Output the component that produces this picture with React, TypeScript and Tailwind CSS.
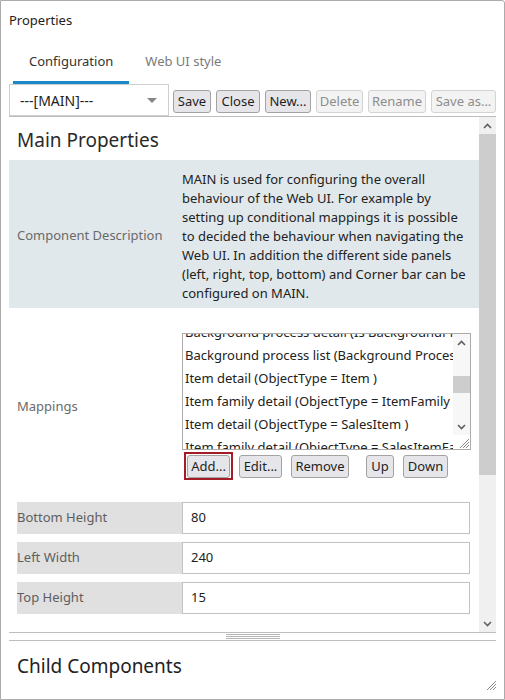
import React from 'react'

// Properties dialog – recreated as a static layout

const font = "font-['Noto_Sans','Open_Sans',sans-serif]"

function Chevron({ up }: { up?: boolean }) {
  return (
    <svg width="9" height="6" viewBox="0 0 9 6">
      <path
        d={up ? 'M1 5 L4.5 1.5 L8 5' : 'M1 1 L4.5 4.5 L8 1'}
        fill="none"
        stroke="#606060"
        strokeWidth="1.6"
      />
    </svg>
  )
}

function Grip() {
  return (
    <svg width="11" height="11" viewBox="0 0 11 11">
      <path d="M10 1 L1 10 M10 4 L4 10 M10 7 L7 10" stroke="#8a8a8a" strokeWidth="1" />
    </svg>
  )
}

function Btn({ label, w, disabled }: { label: string; w: string; disabled?: boolean }) {
  return (
    <div
      className={`${w} h-[23px] flex items-center justify-center rounded-[3px] border text-[13px] leading-none ${
        disabled
          ? 'border-[#d3d3d3] bg-[#f3f3f3] text-[#8d8d8d]'
          : 'border-[#a3a3a3] bg-[#e6e6ea] text-[#1e1e1e]'
      }`}
    >
      {label}
    </div>
  )
}

const description = [
  'MAIN is used for configuring the overall',
  'behaviour of the Web UI. For example by',
  'setting up conditional mappings it is possible',
  'to decided the behaviour when navigating the',
  'Web UI. In addition the different side panels',
  '(left, right, top, bottom) and Corner bar can be',
  'configured on MAIN.',
]

const mappings = [
  'Background process detail (Is BackgroundProcess = true )',
  'Background process list (Background Process list )',
  'Item detail (ObjectType = Item )',
  'Item family detail (ObjectType = ItemFamily )',
  'Item detail (ObjectType = SalesItem )',
  'Item family detail (ObjectType = SalesItemFamily )',
]

const fields = [
  { label: 'Bottom Height', value: '80' },
  { label: 'Left Width', value: '240' },
  { label: 'Top Height', value: '15' },
]

export default function App() {
  return (
    <div
      className={`${font} w-[505px] h-[700px] bg-white border border-[#ababab] rounded-tr-[3px] flex flex-col overflow-hidden text-[#222]`}
    >
      {/* title */}
      <div className="pl-[8px] pt-[9px] text-[13px] leading-[20px] text-[#222]">Properties</div>

      {/* tabs */}
      <div className="flex ml-[12px] mt-[11px] text-[13px] leading-[20px]">
        <div className="px-[16px] pt-[10px] pb-[10px] border-b-[3px] border-[#1c87c9] text-[#333]">
          Configuration
        </div>
        <div className="px-[16px] pt-[10px] pb-[10px] border-b-[3px] border-transparent text-[#7a7a7a]">
          Web UI style
        </div>
      </div>

      {/* toolbar */}
      <div className="flex items-center ml-[8px] h-[32px]">
        <div className="w-[160px] h-[32px] border border-[#cfcfcf] flex items-center justify-between pl-[10px] pr-[11px] text-[14px] text-[#222]">
          <span>---[MAIN]---</span>
          <svg width="10" height="5" viewBox="0 0 10 5">
            <path d="M0 0 L10 0 L5 5 Z" fill="#858585" />
          </svg>
        </div>
        <div className="flex items-center gap-[5px] ml-[4px] mt-[2px]">
          <Btn label="Save" w="w-[38px]" />
          <Btn label="Close" w="w-[44px]" />
          <Btn label="New..." w="w-[46px]" />
          <Btn label="Delete" w="w-[47px]" disabled />
          <Btn label="Rename" w="w-[58px]" disabled />
          <Btn label="Save as..." w="w-[65px]" disabled />
        </div>
      </div>

      {/* scrolling properties area */}
      <div className="mx-[8px] h-[517px] border-y border-[#bdbdbd] flex">
        <div className="flex-1 overflow-hidden">
          <div className="h-[43px] pl-[8px] pt-[10px] text-[19px] leading-[26px] text-[#2a2a2a]">
            Main Properties
          </div>

          {/* description */}
          <div className="h-[148px] bg-[#e1e8eb] flex">
            <div className="w-[173px] pl-[8px] pt-[4px] flex items-center text-[13px] text-[#6a6a6a]">
              Component Description
            </div>
            <div className="pt-[10px] text-[13px] leading-[19px] text-[#222]">
              {description.map((l) => (
                <div key={l} className="whitespace-nowrap">
                  {l}
                </div>
              ))}
            </div>
          </div>

          {/* mappings */}
          <div className="flex pt-[25px] pb-[22px]">
            <div className="w-[173px] pl-[8px] flex items-center text-[13px] text-[#6a6a6a]">Mappings</div>
            <div className="flex flex-col">
              <div className="w-[289px] h-[117px] border border-[#ababab] flex overflow-hidden bg-white">
                <div className="flex-1 overflow-hidden">
                  <div className="-mt-[13px]">
                    {mappings.map((m) => (
                      <div key={m} className="h-[23px] leading-[23px] pl-[2px] text-[13px] whitespace-nowrap text-[#222]">
                        {m}
                      </div>
                    ))}
                  </div>
                </div>
                <div className="w-[17px] flex flex-col bg-[#f7f7f7]">
                  <div className="h-[17px] flex items-center justify-center">
                    <Chevron up />
                  </div>
                  <div className="h-[25px]" />
                  <div className="h-[17px] bg-[#cdcdcd]" />
                  <div className="flex-1" />
                  <div className="h-[17px] flex items-center justify-center">
                    <Chevron />
                  </div>
                  <div className="h-[14px] bg-white flex items-end justify-end">
                    <Grip />
                  </div>
                </div>
              </div>
              <div className="flex items-center mt-[2px] ml-[2px] text-[13px]">
                <div className="h-[28px] border-2 border-[#a31c26] p-[1px] flex items-center">
                  <Btn label="Add..." w="w-[43px]" />
                </div>
                <div className="ml-[6px]">
                  <Btn label="Edit..." w="w-[43px]" />
                </div>
                <div className="ml-[9px]">
                  <Btn label="Remove" w="w-[58px]" />
                </div>
                <div className="ml-[17px]">
                  <Btn label="Up" w="w-[28px]" />
                </div>
                <div className="ml-[9px]">
                  <Btn label="Down" w="w-[45px]" />
                </div>
              </div>
            </div>
          </div>

          {/* simple fields */}
          <div className="flex flex-col gap-[8px] ml-[8px] mr-[9px]">
            {fields.map((f) => (
              <div key={f.label} className="flex h-[32px]">
                <div className="w-[165px] bg-[#e0e0e0] flex items-center text-[13px] text-[#5e5e5e]">{f.label}</div>
                <div className="flex-1 border border-[#c2c2c2] flex items-center pl-[8px] text-[13px] text-[#222]">
                  {f.value}
                </div>
              </div>
            ))}
          </div>
        </div>

        {/* main scrollbar */}
        <div className="w-[17px] flex flex-col bg-[#f0f0f0]">
          <div className="h-[17px] flex items-center justify-center">
            <Chevron up />
          </div>
          <div className="h-[341px] bg-[#cdcdcd]" />
          <div className="flex-1" />
          <div className="h-[17px] flex items-center justify-center">
            <Chevron />
          </div>
        </div>
      </div>

      {/* splitter */}
      <div className="mx-[8px] h-[8px] border-b border-[#bdbdbd] flex flex-col items-center pt-[1px] gap-[1px]">
        <div className="w-[54px] h-px bg-[#b5b5b5]" />
        <div className="w-[54px] h-px bg-[#b5b5b5]" />
        <div className="w-[54px] h-px bg-[#b5b5b5]" />
      </div>

      {/* child components */}
      <div className="flex-1 flex flex-col">
        <div className="pl-[16px] pt-[12px] text-[19px] leading-[26px] text-[#222]">Child Components</div>
        <div className="flex-1" />
        <div className="flex justify-end pr-[7px] pb-[8px]">
          <Grip />
        </div>
      </div>
    </div>
  )
}
